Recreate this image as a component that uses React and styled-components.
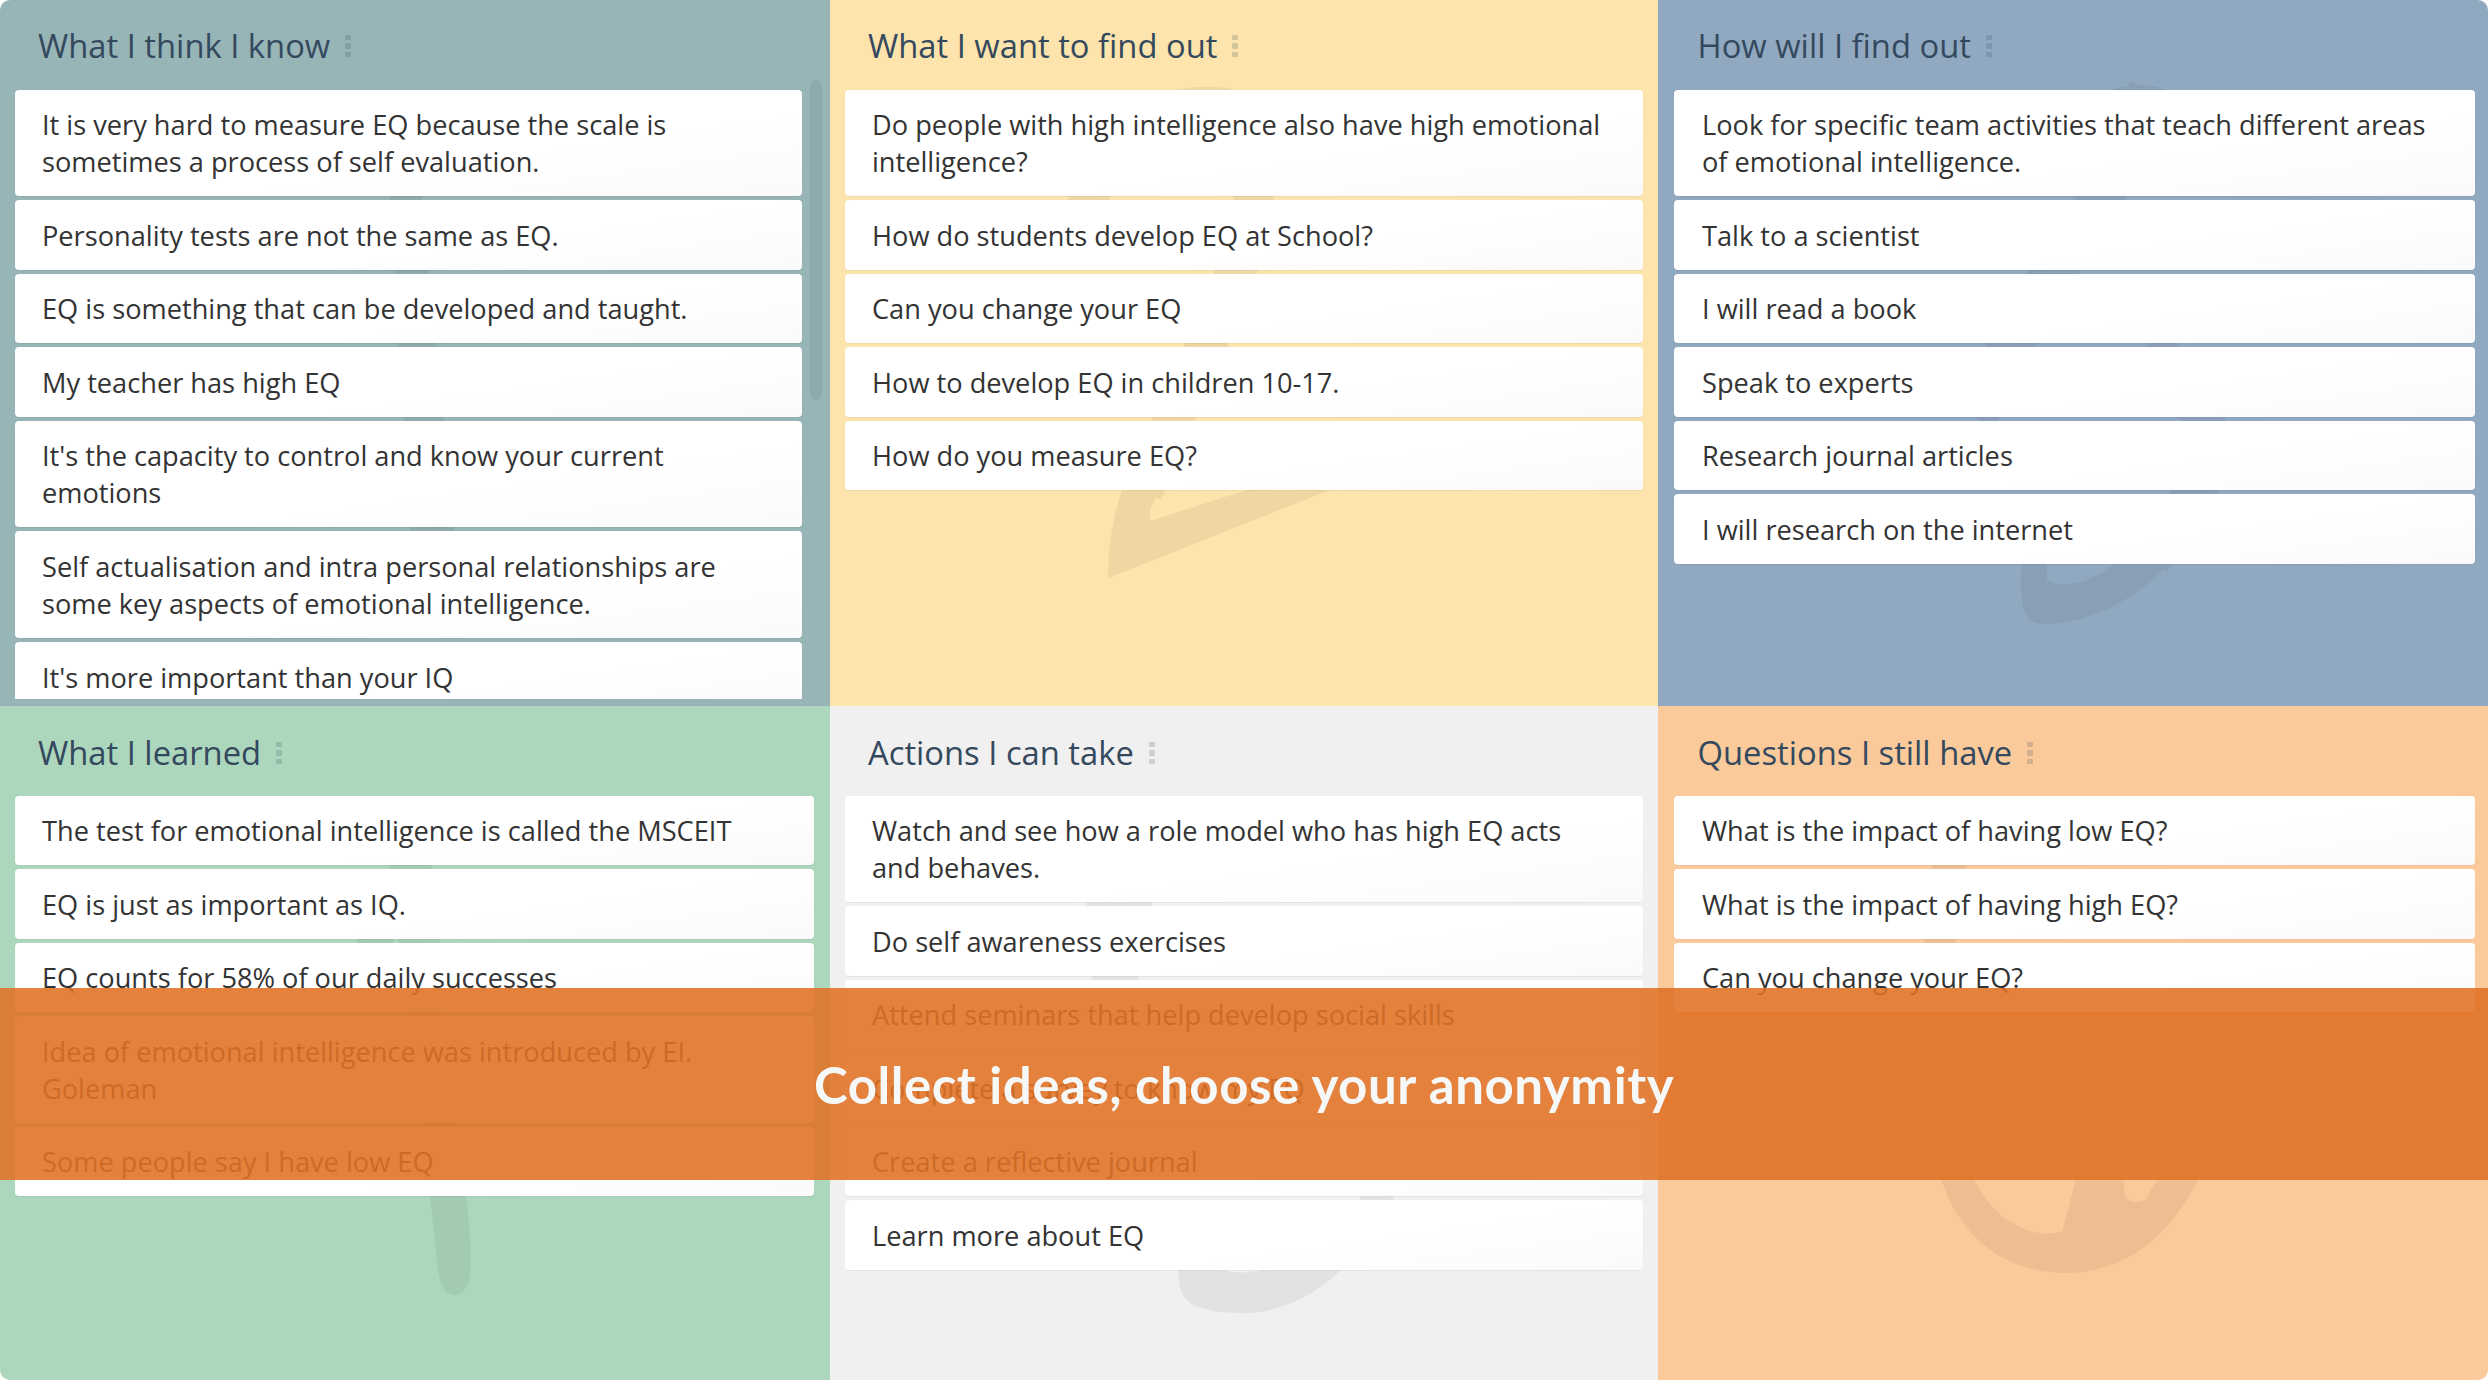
import React from "react";
import styled, { createGlobalStyle } from "styled-components";

const GlobalStyle = createGlobalStyle`
  html, body {
    margin: 0;
    padding: 0;
    background: #ffffff;
    overflow: hidden;
  }
`;

const Board = styled.div`
  position: relative;
  display: grid;
  grid-template-columns: 830px 828px 830px;
  grid-template-rows: 706px 674px;
  width: 2488px;
  height: 1380px;
  border-radius: 10px;
  overflow: hidden;
  font-family: "Open Sans", "Liberation Sans", sans-serif;
`;

const Panel = styled.section`
  position: relative;
  display: flex;
  flex-direction: column;
  min-height: 0;
  overflow: hidden;
  background: ${(props) => props.$color};
`;

const Watermark = styled.svg`
  position: absolute;
  inset: 0;
  width: 100%;
  height: 100%;
  opacity: 0.05;
  pointer-events: none;
`;

const PanelHeader = styled.header`
  position: relative;
  display: flex;
  align-items: center;
  flex: none;
  height: 89.5px;
  padding: ${(props) => props.$top}px 0 0 ${(props) => props.$inset}px;
  box-sizing: border-box;
`;

const PanelTitle = styled.h2`
  margin: 0;
  font-size: 32.75px;
  font-weight: 400;
  color: #34495e;
`;

const Handle = styled.span`
  display: flex;
  flex-direction: column;
  gap: 3px;
  margin-left: 15px;
`;

const HandleDot = styled.i`
  display: block;
  width: 6px;
  height: 5.5px;
  border-radius: 1px;
  background: rgba(52, 73, 94, 0.2);
`;

const CardList = styled.div`
  position: relative;
  display: flex;
  flex-direction: column;
  gap: 4px;
  flex: 1;
  min-height: 0;
  margin-bottom: 7px;
  padding: 0 ${(props) => props.$right}px 0 ${(props) => props.$left}px;
  overflow: hidden;
`;

const Card = styled.div`
  flex: none;
  padding: 16.5px 27px 15.8px ${(props) => props.$indent}px;
  border-radius: 4px;
  background: linear-gradient(172deg, #ffffff 62%, #fafafa 100%);
  box-shadow: 0 1px 1px rgba(0, 0, 0, 0.05);
  font-size: 27.2px;
  line-height: 37.2px;
  color: #333333;
`;

const ScrollThumb = styled.div`
  position: absolute;
  top: 80px;
  left: 810px;
  width: 12px;
  height: 320px;
  border-radius: 6px;
  background: rgba(0, 0, 0, 0.05);
`;

const Banner = styled.div`
  position: absolute;
  top: 988px;
  left: 0;
  right: 0;
  display: flex;
  align-items: center;
  justify-content: center;
  height: 192px;
  background: rgba(223, 113, 37, 0.89);
`;

const BannerText = styled.h1`
  margin: 0;
  font-family: Lato, "Liberation Sans", sans-serif;
  font-size: 51px;
  font-weight: 700;
  letter-spacing: 0.55px;
  color: #f6f7f7;
`;

const One = () => (
  <Watermark viewBox="0 0 830 706">
    <path d="M389 190 L421 190 L455 540 L411 540 Z" />
  </Watermark>
);

const Two = () => (
  <Watermark viewBox="830 0 828 706">
    <path
      d="M1086 215 C1095 130 1170 100 1224 108 C1262 115 1262 210 1236 271 L1207 343 L1174 418 L1143 492"
      fill="none"
      stroke="#000"
      strokeWidth="40"
    />
    <path d="M1122 490 C1112 520 1108 550 1108 578 L1330 490 L1247 490 L1150 521 L1150 510 L1160 490 Z" />
  </Watermark>
);

const Three = () => (
  <Watermark viewBox="1658 0 830 706">
    <ellipse cx="2139" cy="110" rx="45" ry="25" />
    <path
      d="M2150 90 L2102 197 L2054 271 L2011 343 L1975 418"
      fill="none"
      stroke="#000"
      strokeWidth="44"
    />
    <path
      d="M2151 343 L2204 418 C2205 450 2200 470 2196 491 L2150 560"
      fill="none"
      stroke="#000"
      strokeWidth="42"
    />
    <path d="M2022 560 C2020 590 2022 610 2026 615 C2030 622 2036 624 2045 624 C2090 622 2130 605 2173 560 L2120 560 C2100 575 2085 583 2070 584 C2060 585 2050 583 2047 580 L2047 560 Z" />
  </Watermark>
);

const Four = () => (
  <Watermark viewBox="0 706 830 674">
    <path d="M389 860 L431 860 L466 1196 C470 1230 472 1260 470 1275 C468 1290 460 1295 455 1295 C445 1295 440 1285 438 1270 L430 1196 Z" />
    <path d="M357 935 L394 935 L394 945 L357 945 Z" />
  </Watermark>
);

const Five = () => (
  <Watermark viewBox="830 706 828 674">
    <path d="M1086 895 L1153 895 L1137 985 L1092 985 Z" />
    <path d="M1360 1190 L1393 1190 L1393 1205 L1360 1205 Z" />
    <path d="M1178 1265 C1178 1285 1180 1295 1190 1303 C1205 1312 1225 1313 1250 1313 C1290 1310 1320 1290 1343 1268 L1270 1268 C1255 1273 1235 1275 1217 1268 Z" />
  </Watermark>
);

const Six = () => (
  <Watermark viewBox="1658 706 830 674">
    <path d="M1933 860 L1967 860 L1955 945 L1924 945 Z" />
    <path d="M1940 1175 C1955 1230 2000 1273 2065 1273 C2130 1273 2175 1230 2200 1175 L2160 1175 L2145 1200 C2138 1203 2127 1203 2125 1195 L2123 1175 L2077 1175 L2062 1232 C2025 1240 1990 1215 1972 1175 Z" />
  </Watermark>
);

const panels = [
  {
    title: "What I think I know",
    color: "#97b4b6",
    art: One,
    top: 2,
    inset: 38,
    indent: 27,
    left: 15,
    right: 28,
    scroll: true,
    cards: [
      "It is very hard to measure EQ because the scale is sometimes a process of self evaluation.",
      "Personality tests are not the same as EQ.",
      "EQ is something that can be developed and taught.",
      "My teacher has high EQ",
      "It's the capacity to control and know your current emotions",
      "Self actualisation and intra personal relationships are some key aspects of emotional intelligence.",
      "It's more important than your IQ",
    ],
  },
  {
    title: "What I want to find out",
    color: "#fce4ac",
    art: Two,
    top: 2,
    inset: 38,
    indent: 27,
    left: 15,
    right: 15,
    cards: [
      "Do people with high intelligence also have high emotional intelligence?",
      "How do students develop EQ at School?",
      "Can you change your EQ",
      "How to develop EQ in children 10-17.",
      "How do you measure EQ?",
    ],
  },
  {
    title: "How will I find out",
    color: "#90a9c1",
    art: Three,
    top: 2,
    inset: 39.5,
    indent: 28,
    left: 16,
    right: 13,
    cards: [
      "Look for specific team activities that teach different areas of emotional intelligence.",
      "Talk to a scientist",
      "I will read a book",
      "Speak to experts",
      "Research journal articles",
      "I will research on the internet",
    ],
  },
  {
    title: "What I learned",
    color: "#acd7bc",
    art: Four,
    top: 4,
    inset: 38,
    indent: 27,
    left: 15,
    right: 16,
    cards: [
      "The test for emotional intelligence is called the MSCEIT",
      "EQ is just as important as IQ.",
      "EQ counts for 58% of our daily successes",
      "Idea of emotional intelligence was introduced by EI. Goleman",
      "Some people say I have low EQ",
    ],
  },
  {
    title: "Actions I can take",
    color: "#f0f0f0",
    art: Five,
    top: 4,
    inset: 38,
    indent: 27,
    left: 15,
    right: 15,
    cards: [
      "Watch and see how a role model who has high EQ acts and behaves.",
      "Do self awareness exercises",
      "Attend seminars that help develop social skills",
      "Complete a survey to know my EQ",
      "Create a reflective journal",
      "Learn more about EQ",
    ],
  },
  {
    title: "Questions I still have",
    color: "#fbca9b",
    art: Six,
    top: 4,
    inset: 39.5,
    indent: 28,
    left: 16,
    right: 13,
    cards: [
      "What is the impact of having low EQ?",
      "What is the impact of having high EQ?",
      "Can you change your EQ?",
    ],
  },
];

function BoardPanel({ title, color, art: Art, top, inset, indent, left, right, scroll, cards }) {
  return (
    <Panel $color={color}>
      <Art />
      <PanelHeader $top={top} $inset={inset}>
        <PanelTitle>{title}</PanelTitle>
        <Handle>
          <HandleDot />
          <HandleDot />
          <HandleDot />
        </Handle>
      </PanelHeader>
      <CardList $left={left} $right={right}>
        {cards.map((text) => (
          <Card key={text} $indent={indent}>
            {text}
          </Card>
        ))}
      </CardList>
      {scroll && <ScrollThumb />}
    </Panel>
  );
}

export default function App() {
  return (
    <>
      <GlobalStyle />
      <Board>
        {panels.map((panel) => (
          <BoardPanel key={panel.title} {...panel} />
        ))}
        <Banner>
          <BannerText>Collect ideas, choose your anonymity</BannerText>
        </Banner>
      </Board>
    </>
  );
}
